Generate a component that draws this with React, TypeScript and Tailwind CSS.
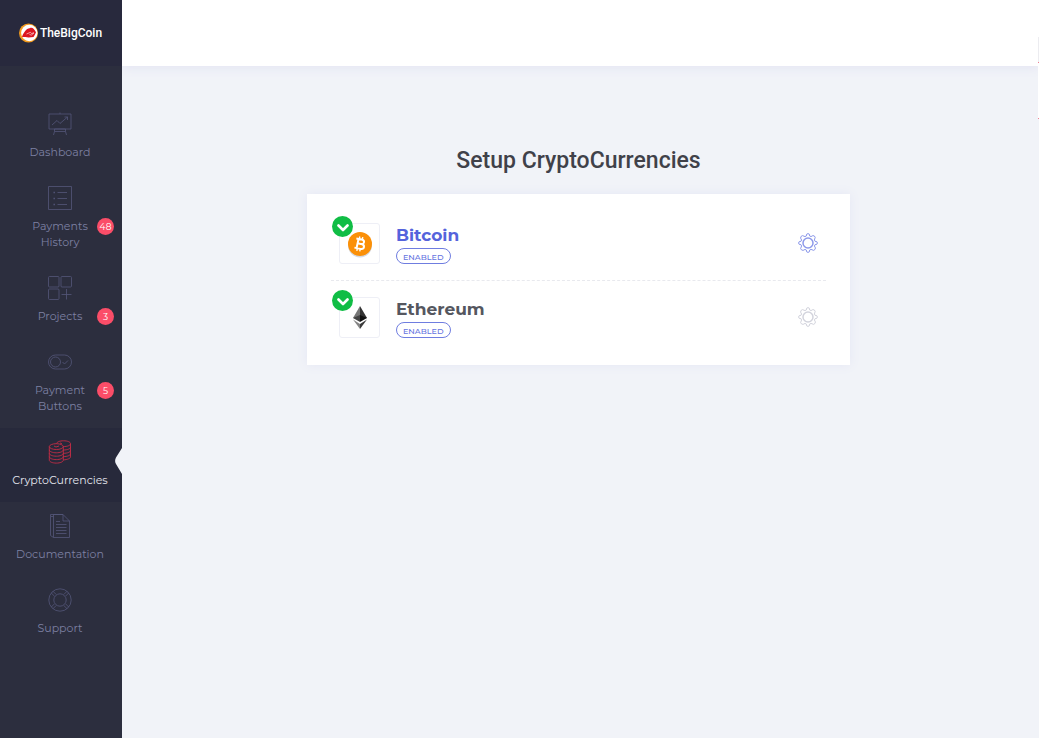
import type { ReactNode } from "react";

const line = {
  viewBox: "0 0 24 24",
  fill: "none",
  stroke: "currentColor",
  strokeWidth: 0.8,
  "aria-hidden": true,
  className: "size-6",
} as const;

function BoardIcon() {
  return (
    <svg {...line}>
      <path d="M1 2h22v15H1zM12 0.5V2M6.500 17h11v2.500h-11zM6.500 19.500 5.500 23M17.500 19.500 18.500 23M4 13l5-4.500 3 3L19.500 5M16.500 5h3v3" />
    </svg>
  );
}

function ListIcon() {
  return (
    <svg {...line}>
      <path d="M.5 .5h23v23H.5zM9.500 6.500H19M9.500 12.500H19M9.500 18.500H19" />
      <path d="M5.500 6.500h1.400M5.500 12.500h1.400M5.500 18.500h1.400" strokeWidth="1.500" />
    </svg>
  );
}

function GridIcon() {
  return (
    <svg {...line}>
      <rect x=".5" y=".5" width="10.500" height="10.500" rx="1" />
      <rect x="13" y=".5" width="10.500" height="10.500" rx="1" />
      <rect x=".5" y="13" width="10.500" height="10.500" rx="1" />
      <path d="M18.500 13v10.500M13.500 18.500h10" />
    </svg>
  );
}

function ToggleIcon() {
  return (
    <svg {...line}>
      <rect x=".5" y="5" width="23" height="14" rx="7" />
      <circle cx="7.500" cy="12" r="5" />
      <path d="m14.500 12 2 2 3.500-3.500" />
    </svg>
  );
}

function CoinsIcon() {
  return (
    <svg {...line} strokeWidth={0.9}>
      <ellipse cx="8.300" cy="6.600" rx="7" ry="2.900" />
      <path d="M1.300 6.600v13.500c0 1.700 3.100 3 7 3s7-1.300 7-3V6.600M1.300 9.800c0 1.700 3.100 3 7 3s7-1.300 7-3M1.300 13.200c0 1.700 3.100 3 7 3s7-1.300 7-3M1.300 16.600c0 1.700 3.100 3 7 3s7-1.300 7-3" />
      <path d="M8.500 3.600C8.800 2 11.700.8 15.500.8c4 0 7 1.200 7 2.900v13.200c0 1.500-3 2.800-7.200 3M22.500 3.700c0 1.700-3 2.900-7.200 2.900M22.500 7.100c0 1.700-3 2.900-7.200 2.900M22.500 10.400c0 1.700-3 2.900-7.200 2.900M22.500 13.700c0 1.700-3 2.900-7.200 2.900M12 2.900l2 1M6 6l2 1 3-1" />
    </svg>
  );
}

function DocIcon() {
  return (
    <svg {...line}>
      <path d="M5.500 3V.5H15l6.500 6.500v16.500h-16V3M5.500 2.500h-3v19l3 2M2.500 .5h12.500M2.500 .5v2M15 .5V7h6.500M8 7.500h4M8 10.500h10.500M8 13.500h10.500M8 16.500h10.500M8 19.500h10.500" />
    </svg>
  );
}

function BuoyIcon() {
  return (
    <svg {...line}>
      <circle cx="12" cy="12" r="11.200" />
      <circle cx="12" cy="12" r="6.200" />
      <path d="m3.300 5 3.200 3.200M5 3.300l3.200 3.200M20.700 5l-3.200 3.200M19 3.300l-3.200 3.200M3.300 19l3.200-3.200M5 20.700l3.200-3.200M20.700 19l-3.200-3.200M19 20.700l-3.200-3.200" />
    </svg>
  );
}

function GearIcon() {
  return (
    <svg viewBox="0 0 20 20" fill="none" stroke="currentColor" strokeWidth="1" strokeLinejoin="round" aria-hidden="true" className="size-5">
      <path d="M8.800 1Q10 .2 11.200 1L11.700 3 13 3.600 14.900 2.600Q16.500 2.400 17.200 4.300L16.400 7 17 8.300 19 8.800Q19.800 10 19 11.200L17 11.700 16.400 13 17.400 14.900Q17.600 16.500 15.700 17.400L13 16.400 11.700 17 11.200 19Q10 19.800 8.800 19L8.300 17 7 16.400 5.100 17.400Q3.200 17.400 2.600 15.500L3.600 13 3 11.700 1 11.200Q.2 10 1 8.800L3 8.300 3.600 7 2.600 5.100Q2.400 3.200 4.500 2.600L7 3.600 8.300 3Z" />
      <circle cx="10" cy="10" r="5" strokeWidth="1.500" />
    </svg>
  );
}

function Logo() {
  return (
    <svg viewBox="0 0 20 20" aria-hidden="true" className="size-5">
      <circle cx="10.500" cy="10" r="9.500" fill="#f39a1d" />
      <circle cx="11.300" cy="10" r="8.200" fill="#fff" />
      <path d="M4 14c.5-3 2.500-5 4-7 1.500-1.800 3.500-1.500 4.500-2.200 2-.6 4 1.200 5.500 4.400l-1 2.300-1.500 2.500-5 .5-3-.5z" fill="#dc1620" />
      <path d="m8.500 11 4-1.700 1 1.200 2.500-.7-2.500 2.200-2-.4" fill="none" stroke="#fff" strokeWidth=".6" />
    </svg>
  );
}

function BitcoinIcon() {
  return (
    <svg viewBox="0 0 26 28" aria-hidden="true" className="h-7 w-[26px]">
      <circle cx="13" cy="15.500" r="12" fill="#d5d9e2" />
      <circle cx="13" cy="14" r="12" fill="#fb9008" />
      <g transform="rotate(12 13 14)" fill="none" stroke="#fff" strokeWidth="2">
        <path d="M8.300 9.300h5.400c3.800 0 3.800 4.500 0 4.500h-3.200M10.500 9.300v9.400M8.300 18.700h6c4.300 0 4.300-4.900 0-4.900" />
        <path d="M11.300 6.700v2.500M14.300 6.700v2.500M11.300 18.700v2.600M14.300 18.700v2.600" strokeWidth="1.400" />
      </g>
    </svg>
  );
}

function EthereumIcon() {
  return (
    <svg viewBox="0 0 16 26" aria-hidden="true" className="h-[26px] w-4">
      <path d="M8 1v12.500L1 13z" fill="#777" />
      <path d="M8 1v12.500l7-.5z" fill="#333" />
      <path d="m1 13 7-3v7z" fill="#444" />
      <path d="m15 13-7-3v7z" fill="#111" />
      <path d="M1 14.500 8 19v5z" fill="#858585" />
      <path d="M15 14.500 8 19v5z" fill="#3b3b3b" />
    </svg>
  );
}

type Item = { label: string; icon: ReactNode; badge?: number; active?: boolean };

const items: Item[] = [
  { label: "Dashboard", icon: <BoardIcon /> },
  { label: "Payments History", icon: <ListIcon />, badge: 48 },
  { label: "Projects", icon: <GridIcon />, badge: 3 },
  { label: "Payment Buttons", icon: <ToggleIcon />, badge: 5 },
  { label: "CryptoCurrencies", icon: <CoinsIcon />, active: true },
  { label: "Documentation", icon: <DocIcon /> },
  { label: "Support", icon: <BuoyIcon /> },
];

function NavItem({ label, icon, badge, active }: Item) {
  return (
    <li>
      <a
        href="#"
        aria-current={active ? "page" : undefined}
        className={`relative flex flex-col items-center gap-2 pt-3 pr-0.5 pb-3.5 text-center text-[11px] leading-4 ${
          active ? "bg-[#27293b] text-[#e4e5ee]" : "text-[#7d80a2]"
        }`}
      >
        <span className={active ? "text-[#c42c46]" : "text-[#54577a]"}>{icon}</span>
        <span className={badge ? "w-16" : ""}>{label}</span>
        {badge && (
          <span className="absolute top-11 right-2 flex size-[17px] items-center justify-center rounded-full bg-[#fb4d68] text-[9px] text-white">
            {badge}
          </span>
        )}
        {active && (
          <svg viewBox="0 0 7 26" aria-hidden="true" className="absolute top-5 right-0 h-[26px] w-[7px]">
            <path d="M7 0 1 9.500Q-.8 13 1 16L7 26z" fill="#f1f3f8" />
          </svg>
        )}
      </a>
    </li>
  );
}

function Coin({ name, icon, selected }: { name: string; icon: ReactNode; selected?: boolean }) {
  return (
    <li className="flex items-center justify-between px-2 py-4 not-last:border-b not-last:border-dashed not-last:border-[#e8e9ee]">
      <div className="flex items-center gap-4">
        <div className="relative flex size-[41px] items-center justify-center rounded-[3px] border border-[#eeeff6]">
          {icon}
          <span className="absolute -top-2 -left-2 flex size-[21px] items-center justify-center rounded-full bg-[#10bd45]">
            <svg viewBox="0 0 12 8" fill="none" stroke="#fff" strokeWidth="2.600" strokeLinecap="round" strokeLinejoin="round" aria-hidden="true" className="mt-0.5 h-2 w-3">
              <path d="m1.500 1.500 4.500 4.500 4.500-4.500" />
            </svg>
          </span>
        </div>
        <div className="flex flex-col items-start gap-px">
          <h2 className={`text-[17px] leading-6 font-bold ${selected ? "text-[#5563dc]" : "text-[#55575f]"}`}>{name}</h2>
          <span className="flex h-4 items-center rounded-full border border-[#6f7de0] px-1.5 pt-px text-[8px] font-medium text-[#6674df]">ENABLED</span>
        </div>
      </div>
      <button type="button" aria-label={`${name} settings`} className={`pb-0.5 ${selected ? "text-[#8e9aea]" : "text-[#d3d4dd]"}`}>
        <GearIcon />
      </button>
    </li>
  );
}

export default function App() {
  return (
    <div className="relative flex min-h-screen overflow-hidden bg-[#f1f3f8] font-['Montserrat','Inter',sans-serif]">
      <aside className="relative z-10 w-[122px] shrink-0 bg-[#2c2e3e]">
        <a href="#" className="flex h-[66px] items-center justify-center gap-0.5 bg-[#28293d] pr-0.5 font-['Roboto',sans-serif] text-xs font-medium text-white">
          <Logo />
          TheBigCoin
        </a>
        <nav aria-label="Main" className="pt-[34px]">
          <ul>
            {items.map((item) => (
              <NavItem key={item.label} {...item} />
            ))}
          </ul>
        </nav>
      </aside>

      <div className="flex min-w-0 flex-1 flex-col">
        <header className="h-[66px] bg-white shadow-[0_2px_10px_#e4e5f3]" />
        <main className="flex flex-col items-center gap-4 pt-[78px] pr-1">
          <h1 className="font-['Roboto',sans-serif] text-[23px] leading-[34px] font-medium text-[#404149]">Setup CryptoCurrencies</h1>
          <ul className="w-full max-w-[543px] bg-white px-6 pt-[13px] pb-[11px] shadow-[0_0_10px_#e5e7f4]">
            <Coin name="Bitcoin" icon={<BitcoinIcon />} selected />
            <Coin name="Ethereum" icon={<EthereumIcon />} />
          </ul>
        </main>
      </div>

      <div aria-hidden="true" className="absolute top-[37px] right-0 flex w-px flex-col">
        <span className="h-[25px] bg-[#ececf0]" />
        <span className="h-px bg-[#f27f93]" />
        <span className="h-[55px] bg-white" />
        <span className="h-px bg-[#f27f93]" />
      </div>
    </div>
  );
}
